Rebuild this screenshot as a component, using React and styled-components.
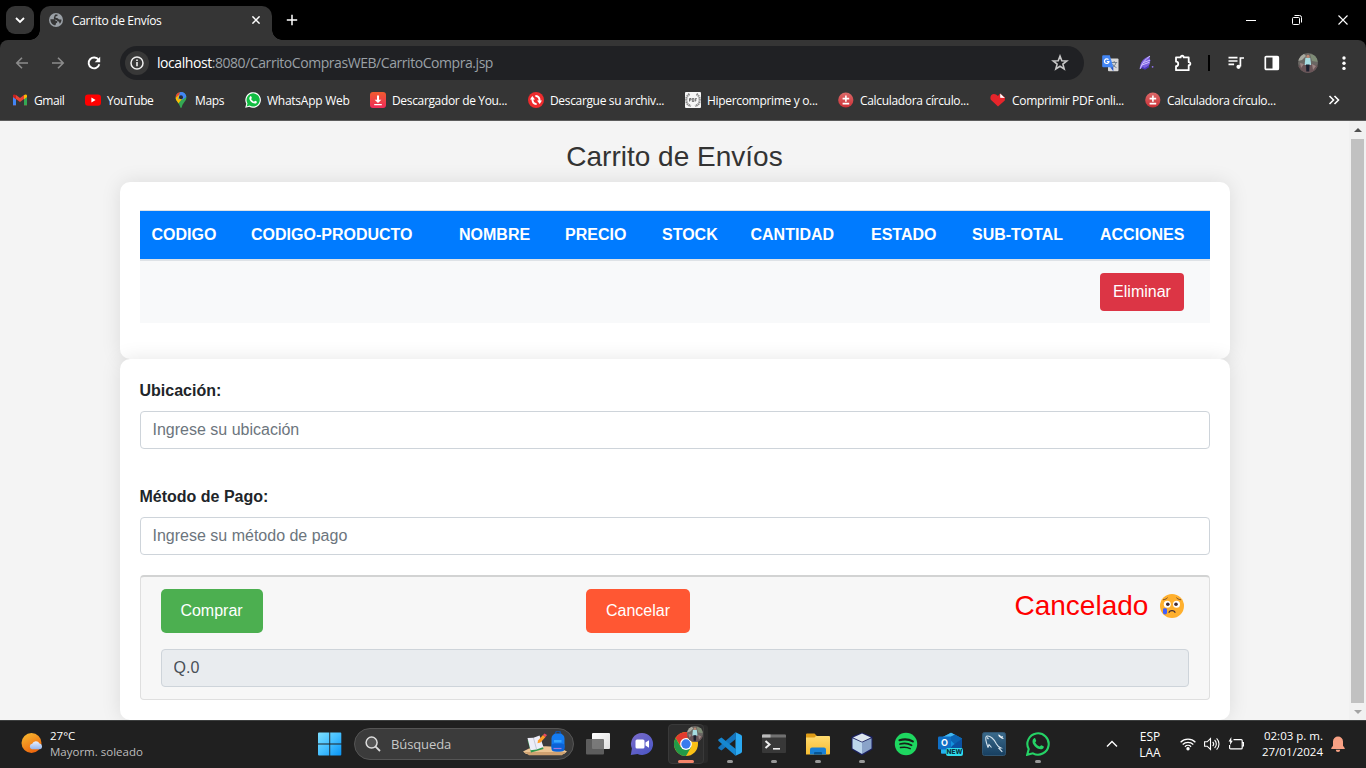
import React from "react";
import styled, { createGlobalStyle } from "styled-components";

const GlobalStyle = createGlobalStyle`
  *, *::before, *::after { box-sizing: border-box; }
  html, body { margin: 0; padding: 0; overflow: hidden; background: #000; }
  svg { display: block; flex: none; }
`;

const uiFont = `"Segoe UI", "Open Sans", "Noto Sans", sans-serif`;
const pageFont = `Arial, "Liberation Sans", sans-serif`;

const Screen = styled.div`
  width: 1366px;
  height: 768px;
  display: flex;
  flex-direction: column;
  overflow: hidden;
  font-family: ${uiFont};
  font-size: 12px;
  color: #fff;
`;

/* ---------- Tab strip ---------- */
const TabStrip = styled.header`
  height: 40px;
  flex: none;
  display: flex;
  align-items: flex-start;
  background: #000;
  padding-left: 6px;
`;
const TabSearch = styled.button`
  width: 28px;
  height: 28px;
  margin: 6px 6px 0 0;
  padding: 0;
  border: 0;
  border-radius: 9px;
  background: #353535;
  display: grid;
  place-items: center;
`;
const Tab = styled.div`
  position: relative;
  width: 232px;
  height: 34px;
  margin-top: 6px;
  padding: 0 12px 6px 9px;
  border-radius: 10px 10px 0 0;
  background: #353535;
  display: flex;
  align-items: center;
  &::before, &::after {
    content: "";
    position: absolute;
    bottom: 0;
    width: 10px;
    height: 10px;
  }
  &::before { left: -10px; background: radial-gradient(circle at 0 0, transparent 9.5px, #353535 10px); }
  &::after { right: -10px; background: radial-gradient(circle at 100% 0, transparent 9.5px, #353535 10px); }
`;
const TabTitle = styled.span`
  flex: 1;
  margin-left: 9px;
  padding-top: 2px;
  line-height: 28px;
  letter-spacing: -0.32px;
  white-space: nowrap;
`;
const NewTab = styled.div`
  width: 40px;
  height: 40px;
  display: grid;
  place-items: center;
`;
const WindowButtons = styled.div`
  margin-left: auto;
  display: flex;
`;
const WindowButton = styled.div`
  width: 46px;
  height: 40px;
  display: grid;
  place-items: center;
`;

/* ---------- Toolbar ---------- */
const Chrome = styled.div`
  flex: none;
  height: 81px;
  background: #353535;
  border-radius: 8px 8px 0 0;
  border-bottom: 1px solid #5c5c5c;
`;
const Toolbar = styled.div`
  height: 46px;
  display: flex;
  align-items: center;
`;
const NavButtons = styled.div`
  width: 120px;
  padding-left: 12px;
  display: flex;
  gap: 16px;
`;
const Omnibox = styled.div`
  width: 964px;
  height: 34px;
  padding: 0 15px 0 5px;
  border-radius: 17px;
  background: #202124;
  display: flex;
  align-items: center;
`;
const InfoButton = styled.div`
  width: 24px;
  height: 24px;
  border-radius: 50%;
  background: #383838;
  display: grid;
  place-items: center;
  margin-right: 8px;
`;
const Url = styled.span`
  flex: 1;
  padding-bottom: 1px;
  font-size: 14px;
  letter-spacing: -0.44px;
  color: #9aa0a6;
  white-space: nowrap;
  b { font-weight: 400; color: #fff; }
`;
const ToolbarIcons = styled.div`
  flex: 1;
  display: flex;
  align-items: center;
  padding-left: 18px;
`;
const IconSlot = styled.div`
  width: ${(p) => p.$w}px;
  height: 24px;
  display: flex;
  align-items: center;
  justify-content: flex-start;
`;

/* ---------- Bookmarks ---------- */
const Bookmarks = styled.nav`
  height: 34px;
  display: flex;
  align-items: center;
  padding: 0 26px 6px 12px;
`;
const Bookmark = styled.div`
  flex: none;
  width: ${(p) => p.$w}px;
  display: flex;
  align-items: center;
  gap: 6px;
  white-space: nowrap;
  letter-spacing: ${(p) => p.$track}px;
`;
const More = styled.div`
  margin-left: auto;
`;

/* ---------- Web page ---------- */
const Viewport = styled.main`
  height: 599px;
  flex: none;
  display: flex;
  background: #f4f4f4;
  color: #212529;
  font: 16px/24px ${pageFont};
`;
const Page = styled.div`
  width: 1349px;
  overflow: hidden;
`;
const Container = styled.div`
  width: 1110px;
  margin: 0 auto;
  padding-top: 19px;
`;
const Title = styled.h2`
  margin: 0 0 8px;
  height: 34px;
  font-size: 28px;
  line-height: 34px;
  font-weight: 400;
  text-align: center;
  color: #333;
`;
const Panel = styled.section`
  height: ${(p) => p.$h}px;
  padding: ${(p) => p.$top}px 20px 20px;
  border-radius: 10px;
  background: #fff;
  box-shadow: 0 0 20px rgba(0, 0, 0, 0.1);
`;
const Table = styled.table`
  width: 100%;
  table-layout: fixed;
  border-collapse: separate;
  border-spacing: 0;
`;
const HeadCell = styled.th`
  width: ${(p) => p.$w}px;
  height: 51px;
  padding: 12px;
  border-top: 1px solid #dee2e6;
  border-bottom: 2px solid #dee2e6;
  background: #007bff;
  color: #fff;
  text-align: left;
  line-height: 24px;
  white-space: nowrap;
  overflow: visible;
`;
const Cell = styled.td`
  height: 62px;
  padding: 12px;
  background: #f8f9fa;
`;
const Button = styled.button`
  height: ${(p) => p.$h}px;
  width: ${(p) => p.$w}px;
  padding: 0;
  border: 0;
  border-radius: ${(p) => p.$r}px;
  background: ${(p) => p.$bg};
  color: #fff;
  font: 16px/24px ${pageFont};
  display: block;
`;
const Label = styled.label`
  display: block;
  height: 24px;
  margin-bottom: 8px;
  font-weight: 700;
`;
const Field = styled.input`
  display: block;
  width: 100%;
  height: 38px;
  padding: 6px 12px;
  border: 1px solid #ced4da;
  border-radius: 4px;
  background: ${(p) => (p.readOnly ? "#e9ecef" : "#fff")};
  color: #495057;
  font: 16px/24px ${pageFont};
  margin-bottom: ${(p) => p.$mb || 0}px;
  &::placeholder { color: #6c757d; opacity: 1; }
`;
const Footer = styled.div`
  height: 125px;
  padding: 12px 20px;
  border: 1px solid #dfdfdf;
  border-top: 2px solid #d2d3d3;
  border-radius: 4px;
  background: #f7f7f7;
`;
const Actions = styled.div`
  display: flex;
  justify-content: space-between;
  height: 60px;
`;
const Status = styled.div`
  width: 175px;
  padding-left: 1px;
  display: flex;
  height: 34px;
  font-size: 28px;
  line-height: 34px;
  color: #f00;
  gap: 11px;
  align-items: center;
`;
const ScrollBar = styled.div`
  width: 17px;
  height: 599px;
  background: #f1f1f1;
  display: flex;
  flex-direction: column;
  align-items: center;
`;
const ScrollArrow = styled.div`
  height: 17px;
  width: 17px;
  display: grid;
  place-items: center;
`;
const ScrollThumb = styled.div`
  width: 13px;
  height: 564px;
  margin: 1px 0 0;
  background: #c1c1c1;
`;

/* ---------- Taskbar ---------- */
const Taskbar = styled.footer`
  height: 48px;
  flex: none;
  display: flex;
  align-items: center;
  background: #202020;
  border-top: 1px solid #3d3f3f;
  padding-bottom: 1px;
`;
const Weather = styled.div`
  width: 318px;
  padding-left: 21px;
  display: flex;
  align-items: center;
  gap: 6px;
`;
const TwoLines = styled.div`
  font-size: ${(p) => p.$size || 11.5}px;
  line-height: 16px;
  white-space: nowrap;
  text-align: ${(p) => p.$align || "left"};
  letter-spacing: ${(p) => p.$track || 0}px;
  div + div { color: ${(p) => p.$second || "#fff"}; }
`;
const SearchBox = styled.div`
  width: 220px;
  height: 32px;
  margin: 0 2px 0 12px;
  padding: 0 6px 0 10px;
  border: 1px solid #555;
  border-radius: 16px;
  background: #3b3b3b;
  display: flex;
  align-items: center;
  color: #c8c8c8;
  font-size: 13px;
  letter-spacing: -0.1px;
`;
const SearchLabel = styled.span`
  flex: 1;
  margin-left: 10px;
`;
const App44 = styled.div`
  position: relative;
  width: 44px;
  height: 46px;
  display: grid;
  place-items: center;
  &::after {
    content: "";
    display: ${(p) => (p.$running || p.$active ? "block" : "none")};
    position: absolute;
    left: 50%;
    bottom: 4px;
    width: ${(p) => (p.$active ? 16 : 6)}px;
    height: 3px;
    transform: translateX(-50%);
    border-radius: 2px;
    background: ${(p) => (p.$active ? "#f5856b" : "#989898")};
  }
`;
const ActiveTile = styled.div`
  width: 36px;
  height: 40px;
  border: 1px solid #393939;
  border-radius: 4px;
  background: #2d2d2d;
  display: grid;
  place-items: center;
  box-shadow: 5px 0 0 -1px #292929;
`;
const Tray = styled.div`
  margin-left: auto;
  width: 260px;
  display: flex;
  align-items: center;
`;
const TrayLang = styled.div`
  width: 30px;
  padding-top: 1px;
  margin: 0 15px 0 17px;
`;
const TrayIcons = styled.div`
  display: flex;
  gap: 8px;
`;
const Clock = styled.div`
  width: 79px;
  margin-right: 8px;
`;

/* ---------- Icons ---------- */
const Globe = () => (
  <svg width="14" height="14" viewBox="0 0 14 14">
    <circle cx="7" cy="7" r="7" fill="#9aa0a6" />
    <path d="M1.4 6.200h3.400c1.500 0 1.400 1.900 2.800 1.900 1.200 0 .9 1.600 0 1.800-1 .2-.6 1.700-1.200 2.400-2.900 0-5.100-2.900-5-6.100ZM6.300 1.500c.8 0 2.300.1 2.600.3-.2 1.500-1.500 1.200-2.300 1.800-.6.5-.1 1.500 1 1.400 1.600-.2 1.600 1.500 3 1.500.8 0 1.500-.3 1.900.2 0 1.700-.8 3.200-1.700 4-.6-.7-.3-2-1.400-2.200-1.600-.2-1.300-1.600-2.700-1.700C5 6.700 4.500 5.400 5 4.300c.3-.6.4-2.100 1.300-2.800Z" fill="#353535" />
  </svg>
);
const Cross = ({ size = 8, w = 1.5 }) => (
  <svg width={size} height={size} viewBox="0 0 8 8" stroke="#fff" strokeWidth={w} fill="none"><path d="m.4.4 7.2 7.2M7.6.4.4 7.6" /></svg>
);
const Arrow = ({ right }) => (
  <svg width="20" height="20" viewBox="0 0 20 20" fill="none" stroke="#8c8c8c" strokeWidth="1.600"><path d={right ? "M4 10h11M10 4.800l5.200 5.200-5.200 5.200" : "M16 10H5M10 4.800 4.800 10l5.200 5.200"} /></svg>
);
const Reload = () => (
  <svg width="20" height="20" viewBox="0 0 20 20" fill="none"><path d="M14.600 7A5.400 5.400 0 1 0 15.300 11.200" stroke="#fff" strokeWidth="1.900" /><path d="M16.200 3.800v5.500h-5.500z" fill="#fff" /></svg>
);
const Info = () => (
  <svg width="14" height="14" viewBox="0 0 14 14" fill="none"><circle cx="7" cy="7" r="6" stroke="#eee" strokeWidth="1.500" /><path d="M7 6v4.300M7 3.500v1.600" stroke="#eee" strokeWidth="1.600" /></svg>
);
const Star = () => (
  <svg width="18" height="18" viewBox="0 0 18 18"><path d="m9 2.100 1.800 4.600 5 .3-3.900 3.100 1.300 4.900L9 12.300 4.800 15l1.300-4.900L2.200 7l5-.3Z" fill="none" stroke="#c7c7c7" strokeWidth="1.600" /></svg>
);
const Translate = () => (
  <svg width="17" height="17" viewBox="0 0 17 17">
    <rect x="6" y="3.500" width="10.500" height="12.800" rx="1" fill="#d8d8d8" />
    <path d="M9.200 7.500h6M12.200 6v1.500M14 7.500c-.3 2-2 4-4 5M10.500 9c.8 1.600 2 2.800 4 3.600" stroke="#708090" fill="none" />
    <path d="M1.200.3h6.600l3.500 12H1.200a1 1 0 0 1-1-1v-10a1 1 0 0 1 1-1Z" fill="#4286f5" /><path d="m8.300 12.300 3 4 0-4Z" fill="#2454c6" />
    <path d="M6.500 4.700A2.300 2.300 0 1 0 7 6.600H4.800" stroke="#fff" strokeWidth="1.200" fill="none" />
  </svg>
);
const Feather = () => (
  <svg width="16" height="16" viewBox="0 0 16 16">
    <path d="M.7 14.200C1 7 4.500 2.300 11.200.9c-1 2-.4 3 .4 4.500-.6 1-.9 1.700-.4 2.400-1 3.600-4.400 6.300-8.300 5.100Z" fill="#7a5ee0" />
    <path d="M1.200 13.800C3 8.200 6.300 4.200 11 1M3 10l7.400-2.700M4.500 7.500 11 5.200" stroke="#d2c4ff" strokeWidth="1" fill="none" /><path d="m3 12.500 3 1.400 4-2.600" stroke="#4835b9" strokeWidth="1.400" fill="none" />
    <circle cx="13.600" cy="11.800" r=".9" fill="#8f72ef" />
  </svg>
);
const Puzzle = () => (
  <svg width="18" height="18" viewBox="0 0 18 18" fill="none" stroke="#fff" strokeWidth="1.800"><path d="M2 3.400h4.700c-.1-2.200 3-2.200 3 0h5v4.800c2.200-.2 2.200 3 0 3v5H2v-4c3-.1 3-4.500 0-4.600Z" strokeLinejoin="round" /></svg>
);
const Playlist = () => (
  <svg width="17" height="14" viewBox="0 0 17 14" fill="none" stroke="#fff" strokeWidth="1.700"><path d="M.5 1.600h9M.5 5h9M.5 8.400h5.600M12.400 10.600V2H16" /><circle cx="10.500" cy="10.800" r="2.100" fill="#fff" stroke="none" /></svg>
);
const SidePanel = () => (
  <svg width="16" height="16" viewBox="0 0 16 16"><rect x="1.300" y="1.600" width="13" height="12.800" rx="1" fill="none" stroke="#fff" strokeWidth="1.700" /><path d="M8.500 1.500h6v13h-6z" fill="#fff" /></svg>
);
const Avatar = ({ size = 20 }) => (
  <svg width={size} height={size} viewBox="0 0 20 20">
    <clipPath id={`face${size}`}><circle cx="10" cy="10" r="10" /></clipPath>
    <g clipPath={`url(#face${size})`}>
      <path d="M0 0h20v20H0z" fill="#6a6763" /><path d="M0 2l5-2 3 3-4 4-4 1Z" fill="#a8aaa0" /><path d="M12 1l7 2 1 6-6-1Z" fill="#7e8c76" />
      <path d="M0 13l7-3 7 1 6 2v7H0Z" fill="#6a5558" /><path d="m2 10 4 1-3 4Zm12 1 4 2-3 4Z" fill="#9b8583" />
      <path d="M7.400 4.800h4.800l1 7.300H6.600Z" fill="#a6dce1" /><path d="M8 11.500h3.600l-.4 7H8.300Z" fill="#1d2130" /><circle cx="10" cy="3.400" r="1.600" fill="#ba8873" />
    </g>
  </svg>
);
const Kebab = () => (
  <svg width="4" height="16" viewBox="0 0 4 16" fill="#fff"><circle cx="2" cy="3" r="1.700" /><circle cx="2" cy="8.200" r="1.700" /><circle cx="2" cy="13.400" r="1.700" /></svg>
);

const GmailIcon = () => (
  <svg width="16" height="16" viewBox="0 0 16 16"><path d="M1 3.800v9.500h3V7l4 3 4-3v6.300h3V3.800L12 3 8 6 4 3Z" fill="#ea4335" /><path d="M1 5v8.300h3V7.200Z" fill="#4285f4" /><path d="M12 7.200v6.100h3V5Z" fill="#34a853" /><path d="M12 3.200v4l3-2.300V3.800a1.400 1.400 0 0 0-2.300-1Z" fill="#fbbc04" /><path d="M4 3.200v4L1 4.900V3.800a1.400 1.400 0 0 1 2.300-1Z" fill="#c5221f" /></svg>
);
const YouTubeIcon = () => (
  <svg width="16" height="16" viewBox="0 0 16 16"><rect y="2.400" width="16" height="11.400" rx="3" fill="#f00" /><path d="m6.400 5.600 4.200 2.500-4.200 2.500Z" fill="#fff" /></svg>
);
const MapsIcon = () => (
  <svg width="16" height="16" viewBox="0 0 16 16"><clipPath id="pin"><path d="M8 0a5.400 5.400 0 0 0-5.400 5.400C2.600 9 6.300 10.800 7.200 15c.3 1.300 1.300 1.300 1.600 0 .9-4.200 4.600-6 4.600-9.600A5.400 5.400 0 0 0 8 0Z" /></clipPath><g clipPath="url(#pin)"><path d="M0 0h16v16H0z" fill="#34a853" /><path d="M7 0h9v3L9 8Z" fill="#4285f4" /><path d="M0 0h9L3 6.500Z" fill="#ea4335" /><path d="M0 8 7 2l2 5-5 6Z" fill="#fbbc04" /><path d="M7 0h6L5 8Z" fill="#4285f4" /></g><circle cx="8" cy="5.300" r="2" fill="#252c3a" /></svg>
);
const phone = "M5.400 4.200c.4-.3.8 0 1 .6l.4 1c.1.4-.6.9-.7 1.200.7 1.300 1.700 2.100 2.900 2.700.4-.1.8-1 1.200-.9l1.500.7c.5.4-.1 1.600-.8 1.900-3 1-7.200-3-6.500-5.700.1-.6.5-1.200 1-1.500Z";
const WhatsAppIcon = () => (
  <svg width="16" height="16" viewBox="0 0 16 16"><path d="m.2 15.800 1.100-4A7.800 7.800 0 1 1 4.300 14.800Z" fill="#fff" /><path d="m1.600 14.400.9-3a6.600 6.600 0 1 1 2.200 2.200Z" fill="#12bd42" /><path d={phone} fill="#fff" /></svg>
);
const DownloadIcon = () => (
  <svg width="16" height="16" viewBox="0 0 16 16"><defs><linearGradient id="dl" x2="0" y2="1"><stop stopColor="#f15b2f" /><stop offset="1" stopColor="#ee2c5a" /></linearGradient></defs><rect width="16" height="16" rx="3" fill="url(#dl)" /><path d="M7 3.500h2v4.200h2.400L8 11 4.600 7.700H7ZM4.200 12h7.600v1.200H4.200Z" fill="#fff" /></svg>
);
const SyncIcon = () => (
  <svg width="16" height="16" viewBox="0 0 16 16"><circle cx="8" cy="8" r="8" fill="#ed2b2d" /><path d="M8.600 12C5.700 12.200 4.200 10 4.500 7M7.400 4c2.900-.2 4.400 2 4.100 5" stroke="#fff" strokeWidth="2" fill="none" /><path d="m2 7.400 2.300-3.300L7 7.400ZM14 8.600l-2.300 3.300L9 8.600Z" fill="#fff" /></svg>
);
const PdfIcon = () => (
  <svg width="16" height="16" viewBox="0 0 16 16"><rect width="16" height="16" rx="1" fill="#f6f6f6" /><path d="M4.500 2C1.500 4 1 6.500 1.500 9.500S4 13.500 6 14M11.500 2c3 2 3.500 4.500 3 7.500S12 13.500 10 14" stroke="#888" strokeWidth="2.200" strokeDasharray="1.500 .6" fill="none" /><path d="M4.500 6.500v3m0-3H6V8H4.500M7.300 6.500v3h1.500v-3ZM10.300 9.500v-3h1.500M10.300 8h1.200" stroke="#555" strokeWidth=".8" fill="none" /></svg>
);
const PlusMinusIcon = () => (
  <svg width="16" height="16" viewBox="0 0 16 16"><defs><linearGradient id="pm" x2="0" y2="1"><stop stopColor="#dc6a6a" /><stop offset="1" stopColor="#cb2f35" /></linearGradient></defs><circle cx="7.800" cy="8" r="7.600" fill="url(#pm)" /><path d="M4.600 6.600h6.600M7.900 3.500v6.200M4.600 11.600h6.600" stroke="#fff" strokeWidth="1.600" /></svg>
);
const HeartIcon = () => (
  <svg width="16" height="16" viewBox="0 0 16 16"><path d="M8 14.500.8 7.700C-.8 4 2.500.6 6 2.500L8 4 10 1.500l5 4-.2 3Z" fill="#e6252b" /><path d="M10.200 1.600v4.200l4.600.1Z" fill="#fff" /></svg>
);

const WeatherIcon = () => (
  <svg width="23" height="22" viewBox="0 0 23 22"><defs><linearGradient id="sun" x2=".5" y2="1"><stop stopColor="#f8bd32" /><stop offset="1" stopColor="#ee680e" /></linearGradient><linearGradient id="cl" x2="0" y2="1"><stop stopColor="#e8f1ff" /><stop offset="1" stopColor="#94b4ea" /></linearGradient></defs><circle cx="10.500" cy="10" r="10" fill="url(#sun)" /><path d="M11 16.300a2.800 2.800 0 0 1 .2-5.500 4 4 0 0 1 7.300-.3 3 3 0 0 1 .6 5.800Z" fill="url(#cl)" /></svg>
);
const WindowsIcon = () => (
  <svg width="24" height="24" viewBox="0 0 24 24"><defs><linearGradient id="win" x2="1" y2="1"><stop stopColor="#7de0ff" /><stop offset=".5" stopColor="#45bfff" /><stop offset="1" stopColor="#0894f5" /></linearGradient></defs><path d="M0 1.500A1 1 0 0 1 1 .5h10.300v11H0ZM12.200.5H22.500a1 1 0 0 1 .8 1v10H12.200ZM0 12.500h11.300v11H1a1 1 0 0 1-1-1ZM12.200 12.500h11.100v10a1 1 0 0 1-1 1H12.200Z" fill="url(#win)" /></svg>
);
const SearchIcon = () => (
  <svg width="16" height="16" viewBox="0 0 16 16" fill="none" stroke="#ddd"><circle cx="6.600" cy="6.600" r="5.500" strokeWidth="1.500" fill="#555" /><path d="m10.600 10.600 4.400 4.400" strokeWidth="1.800" /></svg>
);
const SchoolArt = () => (
  <svg width="44" height="26" viewBox="0 0 44 26">
    <path d="M0 20.500 6 17.500c9-3 25-3 32 0l6 3-3 2.500H3Z" fill="#ecc594" /><path d="M1 21h42l-4 3.300H6Z" fill="#cfa271" />
    <path d="m4.500 9 12-3 4 12L8 21.500Z" fill="#31984c" /><path d="m4.500 7 6-.2 6-2.300 4 11.500-7 2.500-6 .8Z" fill="#ededf8" /><path d="m10.500 7 3 11" stroke="#c5c8d8" fill="none" />
    <path d="m15 9.500 5-5.500 2.500 2-5 5.500-3 .8Z" fill="#ff9c25" /><path d="m20 4 1.500-1.500 2.500 1.500-1.500 2Z" fill="#ec4961" />
    <path d="M32.500 4V2.500a2.500 2.500 0 0 1 5 0V4" fill="none" stroke="#1251a6" strokeWidth="1.400" /><rect x="28.500" y="2.500" width="13" height="18" rx="5" fill="#147cf2" /><path d="M31 9h7.500v2.500H31z" fill="#37a6ff" /><rect x="28.500" y="12.500" width="13" height="8" rx="3" fill="#0c62d6" /><path d="M30.500 17.500h8" stroke="#9d79df" strokeWidth="1.200" />
  </svg>
);
const TaskViewIcon = () => (
  <svg width="24" height="24" viewBox="0 0 24 24"><defs><linearGradient id="tv" x2="1" y2="1"><stop stopColor="#fff" /><stop offset="1" stopColor="#dedede" /></linearGradient></defs><rect x="6" y="1" width="18" height="16" rx="1" fill="url(#tv)" /><rect x="0" y="7" width="18" height="15.500" rx="1" fill="#666" fillOpacity=".87" /></svg>
);
const ChatIcon = () => (
  <svg width="24" height="24" viewBox="0 0 24 24"><defs><linearGradient id="ct" x2=".8" y2="1"><stop stopColor="#7b6bc9" /><stop offset="1" stopColor="#4c57c6" /></linearGradient></defs><path d="M12 1a11 11 0 1 1-4.500 21L.8 23l1.100-6.500A11 11 0 0 1 12 1Z" fill="url(#ct)" /><rect x="5.500" y="7.500" width="9" height="9" rx="1.500" fill="#fff" /><path d="m15.500 10.500 3.500-2.300v7.600l-3.500-2.300Z" fill="#fff" /></svg>
);
const ChromeIcon = () => (
  <svg width="32" height="32" viewBox="0 0 32 32"><g transform="translate(4 4)"><circle cx="12" cy="12" r="12" fill="#fbc116" /><path d="M1.600 6A12 12 0 0 1 22.400 6H12l-4.800 9Z" fill="#e33b2e" /><path d="M1.600 6A12 12 0 0 0 12 24l5.200-9H12L6.800 15Z" fill="#229a48" /><circle cx="12" cy="12" r="5.900" fill="#fff" /><circle cx="12" cy="12" r="4.700" fill="#397bed" /></g></svg>
);
const ProfileBadge = styled.div`
  position: absolute;
  top: 5px;
  left: 23px;
`;
const CodeIcon = () => (
  <svg width="24" height="24" viewBox="0 0 24 24"><path d="m17.500.3 5.300 2.500a2 2 0 0 1 1.200 1.800v14.800a2 2 0 0 1-1.200 1.800l-5.300 2.500Z" fill="#2aa9f2" /><path d="M17.500.3 18 6.700 3.500 18.500.300 16.500v-1.300Z" fill="#1474bd" /><path d="M17.500 23.700 18 17.300 3.500 5.500.300 7.500v1.300Z" fill="#1687d1" /></svg>
);
const TerminalIcon = () => (
  <svg width="24" height="20" viewBox="0 0 24 20"><rect y=".5" width="24" height="18.500" rx="1" fill="#383838" /><path d="M1 .5h22a1 1 0 0 1 1 1v2H0v-2a1 1 0 0 1 1-1Z" fill="#707070" /><path d="M0 3.500v-2a1 1 0 0 1 1-1h7.500v3Z" fill="#bbb" /><path d="m3.500 7 4 3.500-4 3.500" fill="none" stroke="#eee" strokeWidth="2" /><path d="M11 14.800h7" stroke="#eee" strokeWidth="1.600" /></svg>
);
const FolderIcon = () => (
  <svg width="24" height="24" viewBox="0 0 24 24"><defs><linearGradient id="fd" x2="0" y2="1"><stop stopColor="#ffdb70" /><stop offset="1" stopColor="#f6bc31" /></linearGradient></defs><path d="M0 2.500a1 1 0 0 1 1-1h7.500L11 4v6H0Z" fill="#df9c16" /><path d="M8.500 5.500 10 4h13a1 1 0 0 1 1 1v16.500a1 1 0 0 1-1 1H0v-17Z" fill="url(#fd)" /><path d="M4 22.500v-5a2 2 0 0 1 2-2h12a2 2 0 0 1 2 2v5Z" fill="#1880d5" /><path d="M8 22.500V21a1 1 0 0 1 1-1h6a1 1 0 0 1 1 1v1.500Z" fill="#075695" /></svg>
);
const CubeIcon = () => (
  <svg width="24" height="24" viewBox="0 0 24 24"><path d="m12 .5 10.500 4.300v12.500L12 23.500 1.500 17.300V4.800Z" fill="#1b2060" /><path d="m12 1.500 9 4L12 9.700 3 5.500Z" fill="#dce6ee" /><path d="M2.500 6.300 12 10.500V22l-9.500-5.500Z" fill="#bcd6ec" /><path d="M21.500 6.300 12 10.500V22l9.500-5.500Z" fill="#8aa3c9" /></svg>
);
const SpotifyIcon = () => (
  <svg width="24" height="24" viewBox="0 0 24 24"><circle cx="12" cy="12" r="11.200" fill="#1ed760" /><g fill="none" stroke="#171f19" strokeLinecap="round"><path d="M5.500 8.200c4.500-1.300 9.500-1 13.300 1.200" strokeWidth="2.200" /><path d="M6 12c4-1 8-.8 11.500 1.200" strokeWidth="1.800" /><path d="M6.500 15.600c3.400-.8 6.800-.6 9.700 1.100" strokeWidth="1.500" /></g></svg>
);
const OutlookBadge = styled.span`
  position: absolute;
  left: 18px;
  top: 27px;
  width: 17px;
  height: 8px;
  border-radius: 2px;
  background: #2fdcec;
  color: #0b3442;
  font: 800 6.5px/8px Inter, ${uiFont};
  text-align: center;
`;
const OutlookLetter = styled.span`
  position: absolute;
  left: 10px;
  top: 17px;
  width: 13px;
  height: 9px;
  color: #fff;
  font: 700 9px/9px Inter, ${uiFont};
  text-align: center;
`;
const OutlookIcon = () => (
  <svg width="24" height="24" viewBox="0 0 24 24"><path d="M3 6 13 .8 24 6.500v15H3Z" fill="#1493df" /><path d="m3 6 10-5.200 4 2L8 8Z" fill="#43b8f2" /><path d="m10 6 7-3.500 7 4-7 6Z" fill="#0c65b4" /><path d="m14 14 10-7.500v15H9Z" fill="#0b51a2" /><path d="m3 13 18 8.500H4.500A1.500 1.500 0 0 1 3 20Z" fill="#22b4ef" /><rect x="0" y="4.500" width="13" height="13" rx="1.200" fill="#0f6fc6" /></svg>
);
const MySqlIcon = () => (
  <svg width="24" height="24" viewBox="0 0 24 24"><defs><linearGradient id="ms" x2="0" y2="1"><stop stopColor="#3b6a8b" /><stop offset="1" stopColor="#173f61" /></linearGradient></defs><rect x=".5" y=".5" width="23" height="23" rx="2" fill="url(#ms)" stroke="#315571" /><path d="M6 15.500C4.500 11.500 3 5.500 4.500 4.200 8 3 12.500 7.500 14.500 12c1 2 2 3 4.500 4l-2 .3 3.300 3.500M6 15.500l1-3 2.500 3M5 5.500l1.500 1.500" fill="none" stroke="#d5e3ed" strokeWidth="1.100" /><path d="m16 2.500 2 .5 1 1.500 2-.5-.5 1.500 1.500 1.500-2-.3-3-2Z" fill="#f3f7fa" /></svg>
);
const WhatsAppBig = () => (
  <svg width="24" height="24" viewBox="0 0 16 16"><path d="m.8 15.200 1-3.800a7.100 7.100 0 1 1 2.800 2.800Z" fill="none" stroke="#25d366" strokeWidth="1.400" /><path d={phone} fill="#25d366" /></svg>
);
const Bell = () => (
  <svg width="14" height="16" viewBox="0 0 14 16" fill="#f8a184"><path d="M7 .5a5 5 0 0 1 5 5v4.200l1.700 2.400v.8H.3v-.8L2 9.700V5.500a5 5 0 0 1 5-5ZM4.800 13.800h4.400a2.200 2.200 0 0 1-4.400 0Z" /></svg>
);
const Wifi = () => (
  <svg width="16" height="14" viewBox="0 0 16 14" fill="none" stroke="#fff" strokeWidth="1.200"><path d="M.6 5.200a10.500 10.500 0 0 1 14.800 0M2.700 7.500a7.500 7.500 0 0 1 10.600 0M4.900 9.700a4.400 4.400 0 0 1 6.200 0" /><circle cx="8" cy="11.800" r="1.100" fill="#fff" /></svg>
);
const Volume = () => (
  <svg width="16" height="14" viewBox="0 0 16 14" fill="none" stroke="#fff" strokeWidth="1.100"><path d="M.6 4.800h2.600L6.500 1.500v11L3.200 9.200H.6ZM8.700 4.900a3 3 0 0 1 0 4.200M10.600 3a5.500 5.500 0 0 1 0 8M12.600 1.300a8 8 0 0 1 0 11.400" /></svg>
);
const Battery = () => (
  <svg width="16" height="14" viewBox="0 0 16 14" fill="none" stroke="#fff" strokeWidth="1.200"><path d="M5.500 2.600h7.700a1 1 0 0 1 1 1v7.300a1 1 0 0 1-1 1H2.600a1 1 0 0 1-1-1V8M14.600 5.700h1v3.300h-1" /><path d="M3.300 0 .6 4.500h1.600L2 8l2.800-4.300H3.300Z" fill="#fff" stroke="none" /></svg>
);
const CryingFace = () => (
  <svg width="26" height="26" viewBox="0 0 26 26" role="img" aria-label="😢"><circle cx="13" cy="13" r="12" fill="#ffb02e" /><circle cx="8.300" cy="11.300" r="3.500" fill="#fff" /><circle cx="17.500" cy="11.300" r="3.500" fill="#fff" /><circle cx="8.800" cy="11.300" r="1.800" fill="#402a32" /><circle cx="17" cy="11.300" r="1.800" fill="#402a32" /><path d="M4.500 6.700c1.500-.2 3-.8 3.800-1.700M21.500 6.700c-1.500-.2-3-.8-3.800-1.700" stroke="#6b442d" strokeWidth="1" fill="none" strokeLinecap="round" /><path d="M10 19.200c1-2 5-2 6 0" stroke="#402a32" strokeWidth="1.300" fill="none" strokeLinecap="round" /><path d="M4 16.500c0-.8.600-1.300 2-1.300s2 .5 2 1.300v3a2 2 0 0 1-4 0Z" fill="#3f5fff" /></svg>
);
const Chevron = ({ up }) => (
  <svg width="12" height="8" viewBox="0 0 12 8" fill="none" stroke="#fff" strokeWidth={up ? 1.4 : 1.8}><path d={up ? "m1 6.500 5-5 5 5" : "m2 2 4 4 4-4"} /></svg>
);

const bookmarks = [
  ["Gmail", GmailIcon, 73, -0.42],
  ["YouTube", YouTubeIcon, 88, -0.42],
  ["Maps", MapsIcon, 72, -0.36],
  ["WhatsApp Web", WhatsAppIcon, 125, -0.26],
  ["Descargador de You...", DownloadIcon, 158, -0.34],
  ["Descargue su archiv...", SyncIcon, 157, -0.34],
  ["Hipercomprime y o...", PdfIcon, 153, -0.32],
  ["Calculadora círculo...", PlusMinusIcon, 152, -0.32],
  ["Comprimir PDF onli...", HeartIcon, 155, -0.32],
  ["Calculadora círculo...", PlusMinusIcon, 140, -0.32],
];
const columns = [
  ["CODIGO", 99.5], ["CODIGO-PRODUCTO", 208], ["NOMBRE", 106], ["PRECIO", 97], ["STOCK", 88.5],
  ["CANTIDAD", 120.5], ["ESTADO", 101], ["SUB-TOTAL", 128], ["ACCIONES", 121.5],
];

export default function App() {
  return (
    <Screen>
      <GlobalStyle />
      <TabStrip>
        <TabSearch><Chevron /></TabSearch>
        <Tab>
          <Globe />
          <TabTitle>Carrito de Envíos</TabTitle>
          <Cross />
        </Tab>
        <NewTab><svg width="12" height="12" viewBox="0 0 12 12" stroke="#fff" strokeWidth="1.500"><path d="M6 .8v10.400M.8 6h10.400" /></svg></NewTab>
        <WindowButtons>
          <WindowButton><svg width="10" height="10" stroke="#fff"><path d="M0 5.500h10" /></svg></WindowButton>
          <WindowButton><svg width="10" height="10" viewBox="0 0 10 10" fill="none" stroke="#fff"><rect x=".5" y="2.500" width="7" height="7" rx="1" /><path d="M2.500.5H7.500a2 2 0 0 1 2 2v5" /></svg></WindowButton>
          <WindowButton><Cross size={10} w={0.9} /></WindowButton>
        </WindowButtons>
      </TabStrip>

      <Chrome>
        <Toolbar>
          <NavButtons><Arrow /><Arrow right /><Reload /></NavButtons>
          <Omnibox>
            <InfoButton><Info /></InfoButton>
            <Url><b>localhost</b>:8080/CarritoComprasWEB/CarritoCompra.jsp</Url>
            <Star />
          </Omnibox>
          <ToolbarIcons>
            <IconSlot $w={37}><Translate /></IconSlot>
            <IconSlot $w={35}><Feather /></IconSlot>
            <IconSlot $w={34}><Puzzle /></IconSlot>
            <IconSlot $w={20}><svg width="2" height="16"><path d="M0 0h2v16H0z" fill="#000" /></svg></IconSlot>
            <IconSlot $w={36}><Playlist /></IconSlot>
            <IconSlot $w={34}><SidePanel /></IconSlot>
            <IconSlot $w={44}><Avatar /></IconSlot>
            <IconSlot $w={4}><Kebab /></IconSlot>
          </ToolbarIcons>
        </Toolbar>
        <Bookmarks>
          {bookmarks.map(([name, Icon, w, track], i) => (
            <Bookmark key={i} $w={w} $track={track}><Icon />{name}</Bookmark>
          ))}
          <More><svg width="12" height="10" viewBox="0 0 12 10" fill="none" stroke="#fff" strokeWidth="1.600"><path d="m1.500 1 4 4-4 4M6.500 1l4 4-4 4" /></svg></More>
        </Bookmarks>
      </Chrome>

      <Viewport>
        <Page>
          <Container>
            <Title>Carrito de Envíos</Title>
            <Panel $h={177} $top={28}>
              <Table>
                <thead><tr>{columns.map(([name, w]) => <HeadCell key={name} $w={w}>{name}</HeadCell>)}</tr></thead>
                <tbody>
                  <tr>
                    {columns.slice(0, 8).map(([name]) => <Cell key={name} />)}
                    <Cell><Button $w={84} $h={38} $r={4} $bg="#dc3545">Eliminar</Button></Cell>
                  </tr>
                </tbody>
              </Table>
            </Panel>
            <Panel $h={361} $top={20}>
              <Label htmlFor="ubicacion">Ubicación:</Label>
              <Field id="ubicacion" placeholder="Ingrese su ubicación" $mb={36} />
              <Label htmlFor="pago">Método de Pago:</Label>
              <Field id="pago" placeholder="Ingrese su método de pago" $mb={20} />
              <Footer>
                <Actions>
                  <Button $w={102} $h={44} $r={5} $bg="#4caf50">Comprar</Button>
                  <Button $w={104} $h={44} $r={5} $bg="#ff5733">Cancelar</Button>
                  <Status>Cancelado <CryingFace /></Status>
                </Actions>
                <Field readOnly value="Q.0" />
              </Footer>
            </Panel>
          </Container>
        </Page>
        <ScrollBar>
          <ScrollArrow><svg width="8" height="4"><path d="M4 0 8 4H0Z" fill="#505050" /></svg></ScrollArrow>
          <ScrollThumb />
          <ScrollArrow><svg width="8" height="4"><path d="M0 0h8L4 4Z" fill="#a3a3a3" /></svg></ScrollArrow>
        </ScrollBar>
      </Viewport>

      <Taskbar>
        <Weather>
          <WeatherIcon />
          <TwoLines $second="#bdbdbd"><div>27°C</div><div>Mayorm. soleado</div></TwoLines>
        </Weather>
        <WindowsIcon />
        <SearchBox><SearchIcon /><SearchLabel>Búsqueda</SearchLabel><SchoolArt /></SearchBox>
        <App44><TaskViewIcon /></App44>
        <App44><ChatIcon /></App44>
        <App44 $active><ActiveTile><ChromeIcon /></ActiveTile><ProfileBadge><Avatar size={16} /></ProfileBadge></App44>
        <App44 $running><CodeIcon /></App44>
        <App44 $running><TerminalIcon /></App44>
        <App44 $running><FolderIcon /></App44>
        <App44 $running><CubeIcon /></App44>
        <App44><SpotifyIcon /></App44>
        <App44><OutlookIcon /><OutlookLetter>O</OutlookLetter><OutlookBadge>NEW</OutlookBadge></App44>
        <App44><MySqlIcon /></App44>
        <App44 $running><WhatsAppBig /></App44>
        <Tray>
          <Chevron up />
          <TrayLang><TwoLines $align="center" $size={12}><div>ESP</div><div>LAA</div></TwoLines></TrayLang>
          <TrayIcons><Wifi /><Volume /><Battery /></TrayIcons>
          <Clock><TwoLines $align="right"><div>02:03 p. m.</div><div>27/01/2024</div></TwoLines></Clock>
          <Bell />
        </Tray>
      </Taskbar>
    </Screen>
  );
}
